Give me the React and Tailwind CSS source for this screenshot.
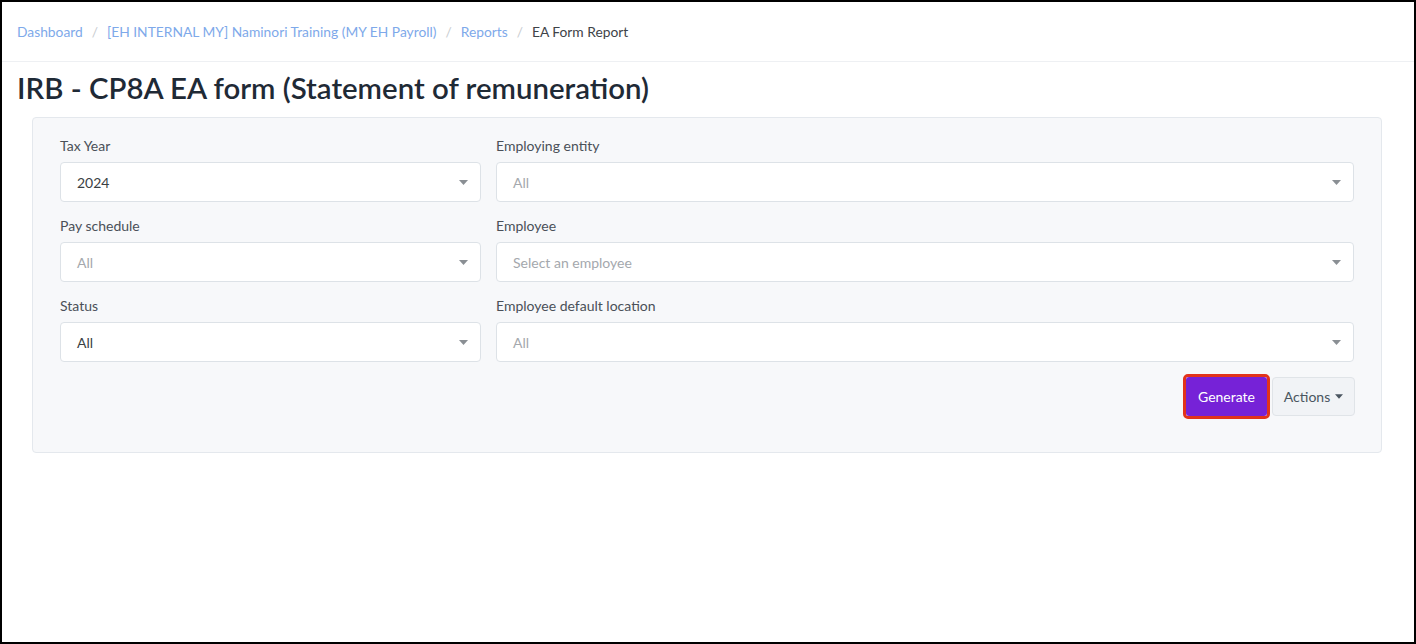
import React from "react";

const Caret = ({ className = "" }) => (
  <svg width="9" height="5" viewBox="0 0 9 5" className={className}>
    <path d="M0 0 L9 0 L4.5 5 Z" fill="currentColor" />
  </svg>
);

function Select({ value, placeholder }) {
  return (
    <div className="h-[40px] bg-white border border-[#dde2e7] rounded-[4px] flex items-center justify-between pl-[16px] pr-[12px]">
      <span className={value ? "text-[14px] text-[#3a3f44]" : "text-[14px] text-[#a4a8ad]"}>
        {value || placeholder}
      </span>
      <Caret className="text-[#8a8f94]" />
    </div>
  );
}

function Field({ label, children }) {
  return (
    <div className="flex flex-col">
      <div className="text-[14px] leading-[20px] text-[#4a5058] mb-[6px]">{label}</div>
      {children}
    </div>
  );
}

export default function App() {
  return (
    <div
      className="w-[1416px] h-[644px] border-2 border-black bg-white box-border overflow-hidden"
      style={{ fontFamily: "Lato, 'Open Sans', sans-serif" }}
    >
      <div className="h-[60px] border-b border-[#eef0f3] flex items-center pt-[2px] pl-[15px] text-[13.8px]">
        <span className="text-[#7ea9ea]">Dashboard</span>
        <span className="text-[#c8ccd0] mx-[9px]">/</span>
        <span className="text-[#7ea9ea]">[EH INTERNAL MY] Naminori Training (MY EH Payroll)</span>
        <span className="text-[#c8ccd0] mx-[9px]">/</span>
        <span className="text-[#7ea9ea]">Reports</span>
        <span className="text-[#c8ccd0] mx-[9px]">/</span>
        <span className="text-[#3e4348]">EA Form Report</span>
      </div>
      <h1 className="pl-[15px] mt-[8px] text-[29.4px] leading-[36px] font-semibold text-[#1f2a36]">
        IRB - CP8A EA form (Statement of remuneration)
      </h1>
      <div className="ml-[30px] mr-[32px] mt-[11px] bg-[#f7f8fa] border border-[#e4e8ed] rounded-[4px] pt-[18px] pb-[33px] px-[27px]">
        <div className="grid grid-cols-[421px_1fr] gap-x-[15px] gap-y-[14px]">
          <Field label="Tax Year"><Select value="2024" /></Field>
          <Field label="Employing entity"><Select placeholder="All" /></Field>
          <Field label="Pay schedule"><Select placeholder="All" /></Field>
          <Field label="Employee"><Select placeholder="Select an employee" /></Field>
          <Field label="Status"><Select value="All" /></Field>
          <Field label="Employee default location"><Select placeholder="All" /></Field>
        </div>
        <div className="flex justify-end items-center mt-[12px] gap-[2px] -mr-[1px]">
          <div className="rounded-[5px] border-[3px] border-[#e2331b] p-0">
            <div className="h-[39px] w-[81px] bg-[#7622d7] rounded-[3px] flex items-center justify-center text-white text-[14px]">
              Generate
            </div>
          </div>
          <div className="h-[39px] w-[83px] bg-[#f1f3f6] border border-[#e0e4e8] rounded-[4px] flex items-center justify-center gap-[5px] text-[14px] text-[#4a5560]">
            Actions
            <Caret className="text-[#4a5560] w-[8px]" />
          </div>
        </div>
      </div>
    </div>
  );
}
